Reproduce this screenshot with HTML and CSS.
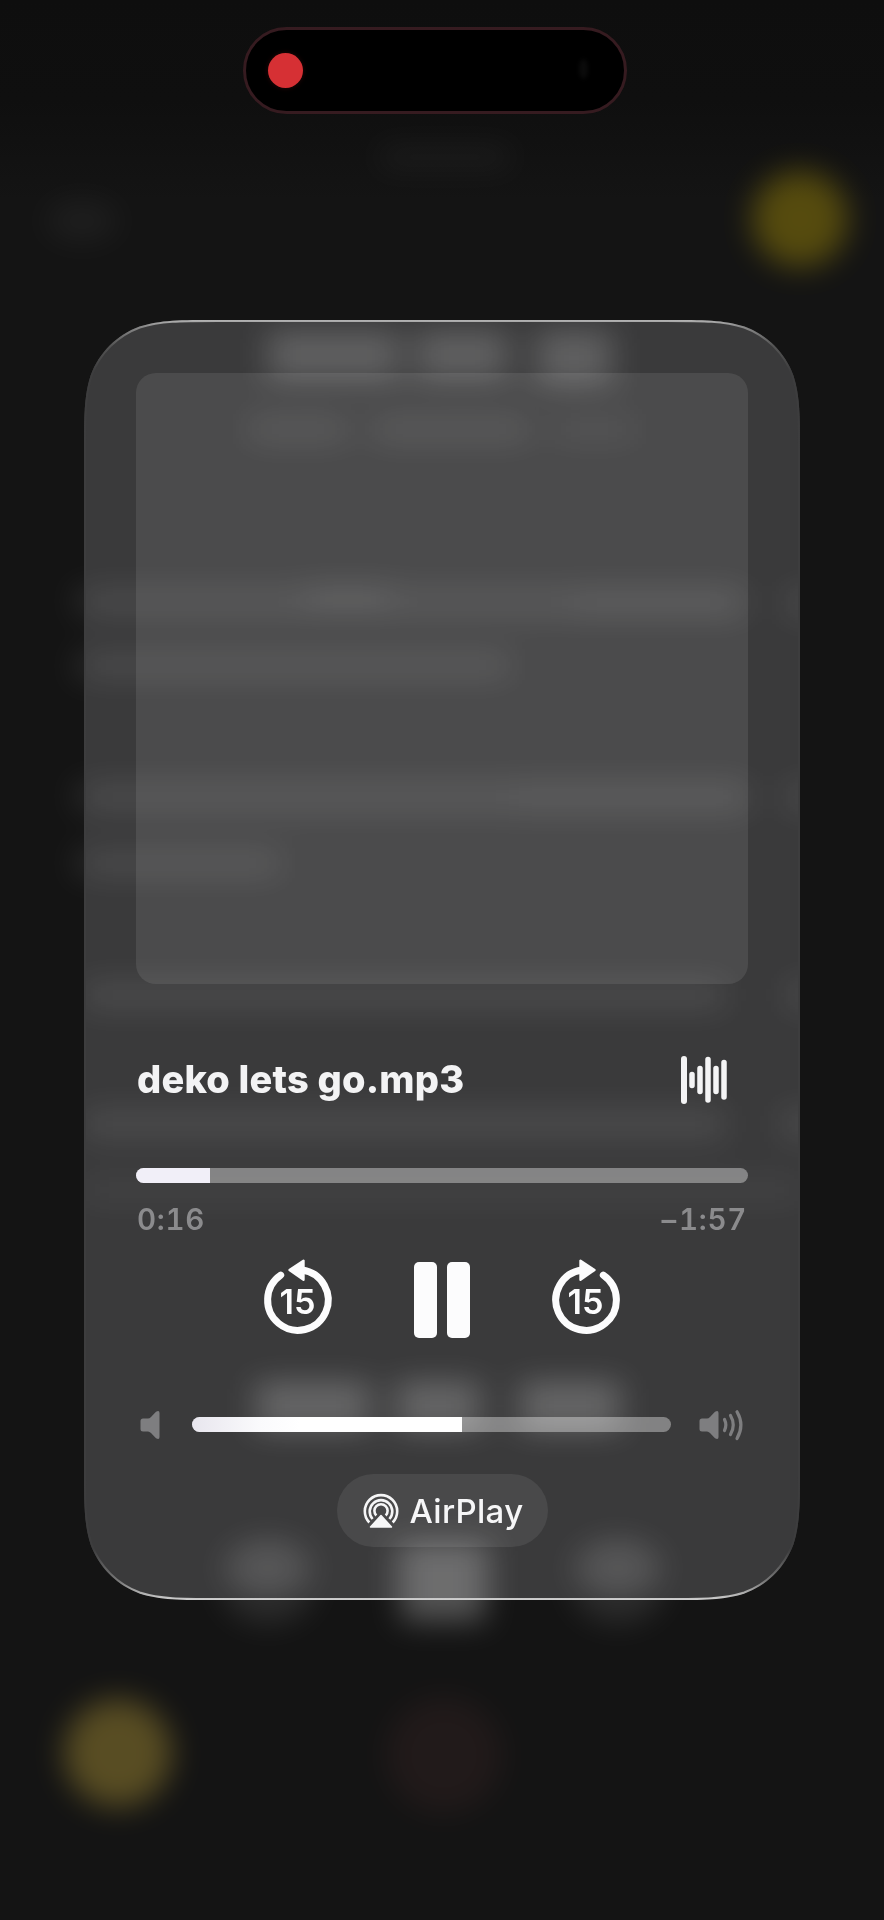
FILE: index.html
```html
<!DOCTYPE html>
<html lang="en">
<head>
<meta charset="utf-8">
<title>Now Playing</title>
<link rel="stylesheet" href="styles.css">
</head>
<body>
<div class="screen">
  <svg class="backdrop" viewBox="0 0 884 1920" aria-hidden="true">
    <defs>
      <filter id="soft" filterUnits="userSpaceOnUse" x="-60" y="0" width="1004" height="1920" color-interpolation-filters="sRGB"><feGaussianBlur stdDeviation="15"/></filter>
    </defs>
    <circle cx="800" cy="219" r="48" fill="#ffd900" opacity=".28" filter="url(#soft)"/>
    <circle cx="118" cy="1753" r="54" fill="#ffd848" opacity=".29" filter="url(#soft)"/>
    <circle cx="444" cy="1755" r="58" fill="#ff8080" opacity=".055" filter="url(#soft)"/>
    <rect x="401" y="1545" width="84" height="76" fill="#fff" opacity=".27" filter="url(#soft)"/>
    <g fill="#fff" opacity=".1">
      <g filter="url(#soft)">
        <ellipse cx="268" cy="1585" rx="46" ry="38"/>
        <ellipse cx="618" cy="1585" rx="46" ry="38"/>
        <rect x="76" y="588" width="60" height="26"/>
        <rect x="76" y="653" width="60" height="26"/>
        <rect x="76" y="783" width="60" height="26"/>
        <rect x="76" y="850" width="60" height="26"/>
      </g>
    </g>
    <g fill="#fff" opacity=".045" filter="url(#soft)">
      <ellipse cx="82" cy="221" rx="36" ry="20"/>
      <rect x="380" y="146" width="130" height="22"/>
    </g>
  </svg>

  <header class="island">
    <span class="rec"></span>
    <span class="lens"></span>
  </header>

  <main class="card">
    <svg class="card-bg" viewBox="0 0 716 1280" aria-hidden="true">
      <defs>
        <path id="shape" d="M0 134.500C0 95.700 0 76.400 6.600 55.500C14.900 32.800 32.800 14.900 55.500 6.600C76.400 0 95.700 0 134.500 0H581.500C620.300 0 639.600 0 660.500 6.600C683.200 14.900 701.100 32.800 709.400 55.500C716 76.400 716 95.700 716 134.500V1145.500C716 1184.300 716 1203.600 709.400 1224.500C701.100 1247.200 683.200 1265.100 660.500 1273.400C639.600 1280 620.300 1280 581.500 1280H134.500C95.700 1280 76.400 1280 55.500 1273.400C32.800 1265.100 14.900 1247.200 6.600 1224.500C0 1203.600 0 1184.300 0 1145.500Z"/>
        <clipPath id="clip"><use href="#shape"/></clipPath>
        <filter id="glow" x="-20%" y="-20%" width="140%" height="140%" color-interpolation-filters="sRGB"><feGaussianBlur stdDeviation="16 14"/></filter>
        <linearGradient id="edge" x1="0" y1="0" x2="0" y2="1">
          <stop offset="0" stop-color="#b4b4b4"/>
          <stop offset=".005" stop-color="#8a8a8a"/>
          <stop offset=".02" stop-color="#555"/>
          <stop offset=".04" stop-color="#3d3d3e"/>
          <stop offset=".96" stop-color="#3d3d3e"/>
          <stop offset=".985" stop-color="#777"/>
          <stop offset="1" stop-color="#cfcfcf"/>
        </linearGradient>
      </defs>
      <g clip-path="url(#clip)">
        <rect width="716" height="1280" fill="#3a3a3b"/>
        <g filter="url(#glow)" fill="#fff">
          <g opacity=".19">
            <rect x="184" y="10" width="132" height="50"/>
            <rect x="332" y="10" width="92" height="50"/>
            <rect x="452" y="10" width="76" height="56"/>
          </g>
          <g opacity=".075">
            <rect x="166" y="94" width="96" height="30"/>
            <rect x="290" y="94" width="154" height="30"/>
            <rect x="470" y="94" width="80" height="30" opacity=".6"/>
            <rect x="0" y="266" width="660" height="32"/>
            <rect x="704" y="266" width="40" height="34"/>
            <rect x="0" y="330" width="424" height="30"/>
            <rect x="0" y="460" width="664" height="34"/>
            <rect x="704" y="460" width="40" height="34"/>
            <rect x="0" y="528" width="194" height="30"/>
            <rect x="0" y="658" width="640" height="34"/>
            <rect x="704" y="658" width="40" height="34"/>
            <rect x="0" y="786" width="640" height="36"/>
            <rect x="698" y="786" width="40" height="36"/>
            <rect x="0" y="855" width="716" height="30" opacity=".5"/>
          </g>
          <rect x="222" y="264" width="84" height="24" opacity=".06"/>
          <rect x="490" y="270" width="162" height="26" opacity=".03"/>
          <rect x="430" y="460" width="228" height="34" opacity=".02"/>
          <g opacity=".21">
            <rect x="172" y="1060" width="114" height="52"/>
            <rect x="312" y="1060" width="84" height="52"/>
            <rect x="436" y="1060" width="100" height="52"/>
          </g>
          <rect x="314" y="1222" width="90" height="84" opacity=".26"/>
          <ellipse cx="184" cy="1248" rx="42" ry="30" opacity=".14"/>
          <ellipse cx="534" cy="1248" rx="42" ry="30" opacity=".14"/>
        </g>
        <use href="#shape" fill="none" stroke="url(#edge)" stroke-width="4"/>
      </g>
    </svg>

    <div class="artwork"></div>

    <div class="title-row">
      <h1 class="title">deko lets go.mp3</h1>
      <svg class="wave" viewBox="0 0 48 50" aria-hidden="true">
        <g stroke="#f4f4f5" stroke-linecap="round" stroke-width="5.500">
          <path stroke-width="6" d="M4 4V46"/>
          <path d="M12 19.500V30.500M20 13.500V36.500M28 4.500V45M36 13.500V36.500M44 7.500V42"/>
        </g>
      </svg>
    </div>

    <div class="track progress"><div class="fill" style="width:73.500px"></div></div>
    <div class="times"><span>0:16</span><span><span class="minus">–</span>1:57</span></div>

    <div class="controls">
      <svg class="skip" viewBox="-36 -40 72 80" aria-label="Back 15 seconds">
        <path d="M4 -30A30.300 30.300 0 1 1 -17.300 -24.900" fill="none" stroke="#fcfcfd" stroke-width="7" stroke-linecap="round"/>
        <path d="M-8.500 -30L5.500 -39.300V-20.300Z" fill="#fcfcfd" stroke="#fcfcfd" stroke-width="2.400" stroke-linejoin="round"/>
        <text class="skip-text" x="-0.500" y="13.500" textLength="36" lengthAdjust="spacingAndGlyphs">15</text>
      </svg>
      <div class="pause"><i></i><i></i></div>
      <svg class="skip" viewBox="-36 -40 72 80" aria-label="Forward 15 seconds">
        <path d="M-4 -30A30.300 30.300 0 1 0 17.300 -24.900" fill="none" stroke="#fcfcfd" stroke-width="7" stroke-linecap="round"/>
        <path d="M8.500 -30L-5.500 -39.300V-20.300Z" fill="#fcfcfd" stroke="#fcfcfd" stroke-width="2.400" stroke-linejoin="round"/>
        <text class="skip-text" x="-0.500" y="13.500" textLength="36" lengthAdjust="spacingAndGlyphs">15</text>
      </svg>
    </div>

    <div class="volume">
      <svg class="mute" viewBox="0 0 20 32" aria-hidden="true">
        <path d="M3 9.500H8Q9.500 9.500 11 8L16 2.800Q19.500 .8 19.500 4V28Q19.500 31.200 16 29.200L11 24Q9.500 22.500 8 22.500H3Q.5 22.500 .5 20V12Q.5 9.500 3 9.500Z" fill="#7e7e80"/>
      </svg>
      <div class="track level"><div class="fill" style="width:269.500px"></div></div>
      <svg class="loud" viewBox="0 0 46 32" aria-hidden="true">
        <path d="M3 9.500H8Q9.500 9.500 11 8L16 2.800Q19.500 .8 19.500 4V28Q19.500 31.200 16 29.200L11 24Q9.500 22.500 8 22.500H3Q.5 22.500 .5 20V12Q.5 9.500 3 9.500Z" fill="#7e7e80"/>
        <path d="M25.500 10.500Q28.200 16 25.500 21.500M31.500 6.500Q37 16 31.500 25.500M38 2.800Q45.800 16 38 29.500" fill="none" stroke="#7e7e80" stroke-width="3.200" stroke-linecap="round"/>
      </svg>
    </div>

    <div class="airplay">
      <svg class="airplay-icon" viewBox="0 0 36 36" aria-hidden="true">
        <g fill="none" stroke="#f6f6f7" stroke-width="2.600">
          <path d="M6.300 29.500A16.200 16.200 0 1 1 29.700 29.500"/>
          <path d="M9.600 26A11.300 11.300 0 1 1 26.400 26"/>
          <path d="M13.300 22.500A6.600 6.600 0 1 1 22.700 22.500"/>
        </g>
        <path d="M18 22.500L28.500 34H7.500Z" fill="#f6f6f7" stroke="#f6f6f7" stroke-width="1.500" stroke-linejoin="round"/>
      </svg>
      <span>AirPlay</span>
    </div>
  </main>
</div>
</body>
</html>
```

FILE: styles.css
```css
* { box-sizing: border-box; }
body { margin: 0; background: #141414; font-family: Inter, "Liberation Sans", sans-serif; }
svg { display: block; flex: none; overflow: visible; }
.screen {
  position: relative;
  width: 884px;
  height: 1920px;
  padding-top: 27px;
  overflow: hidden;
  background: linear-gradient(#0e0e0e 0, #0f0f0f 100px, #141414 200px, #141414 100%);
}
.backdrop { position: absolute; inset: 0; width: 884px; height: 1920px; }
.island {
  position: relative;
  display: flex;
  align-items: center;
  justify-content: space-between;
  width: 384px;
  height: 87px;
  margin-left: 243px;
  padding: 0 36px 0 22px;
  border: 3px solid #361b20;
  border-radius: 44px;
  background: #000;
}
.rec { width: 35px; height: 35px; margin-bottom: 1px; border-radius: 50%; background: #d63034; box-shadow: 0 0 5px #2a0809; }
.lens { width: 9px; height: 20px; margin-bottom: 4px; border-radius: 50%; background: #0b0b0b; filter: blur(2px); }
.card {
  position: relative;
  display: flex;
  flex-direction: column;
  width: 716px;
  height: 1280px;
  margin: 206px 0 0 84px;
  padding: 53px 52px;
}
.card-bg { position: absolute; inset: 0; width: 716px; height: 1280px; }
.card > :not(.card-bg) { position: relative; }
.artwork { height: 611px; border-radius: 20px; background: rgba(255, 255, 255, .09); flex: none; }
.title-row { display: flex; align-items: center; justify-content: space-between; height: 50px; margin-top: 71px; padding-right: 20px; }
.title { margin: 0; padding: 0 0 2px 1px; color: #f3f3f4; font-size: 38px; font-weight: 800; line-height: 50px; letter-spacing: .2px; white-space: nowrap; }
.wave { width: 48px; height: 50px; }
.track { height: 15px; border-radius: 8px; background: rgba(255, 255, 255, .37); overflow: hidden; }
.fill { height: 100%; background: #f1eff8; }
.progress { margin-top: 63px; }
.times { display: flex; justify-content: space-between; height: 36px; margin-top: 18px; padding: 0 1px 0 1px; color: #8b8b8d; font-size: 29.500px; font-weight: 600; line-height: 36px; letter-spacing: .7px; font-variant-numeric: tabular-nums; }
.minus { margin-right: 2px; }
.controls { display: flex; align-items: center; justify-content: center; gap: 79.500px; height: 86px; margin-top: 20px; }
.skip { width: 72px; height: 80px; }
.skip-text { fill: #fcfcfd; font-size: 34.500px; font-weight: 600; text-anchor: middle; }
.pause { display: flex; gap: 10.500px; }
.pause i { width: 23px; height: 76px; border-radius: 5px; background: #fcfcfd; }
.volume { display: flex; align-items: center; height: 32px; margin-top: 66px; padding-left: 4px; }
.mute { width: 20px; height: 32px; }
.level { width: 479px; margin-left: 32px; }
.level .fill { background: linear-gradient(90deg, #e8e6ee, #fafafc 25%, #fff 40%); }
.loud { width: 46px; height: 32px; margin-left: 28px; }
.airplay {
  display: flex;
  align-items: center;
  align-self: center;
  gap: 11px;
  width: 211px;
  height: 73px;
  margin-top: 33.500px;
  padding-left: 26px;
  border-radius: 37px;
  background: rgba(255, 255, 255, .08);
  color: #f6f6f7;
  font-size: 33px;
  font-weight: 500;
  letter-spacing: .3px;
  white-space: nowrap;
}
.airplay-icon { width: 36px; height: 36px; }
```
